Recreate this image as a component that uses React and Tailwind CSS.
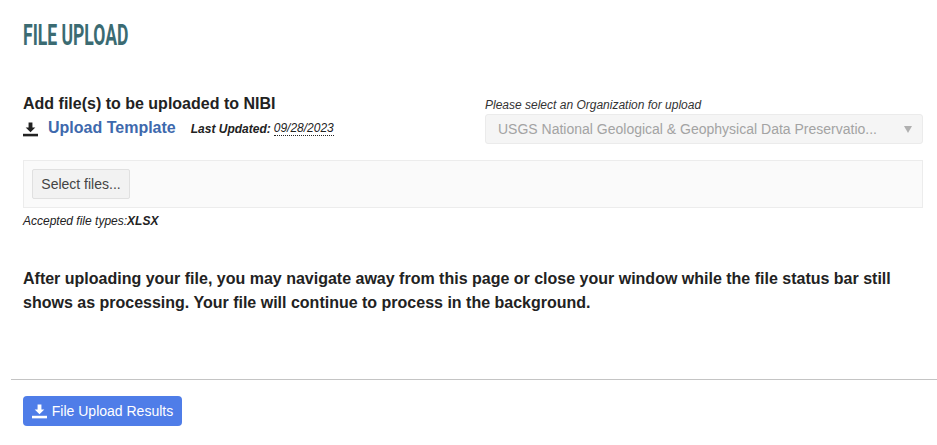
const Dl = ({ className }) => (
  <svg viewBox="0 0 14 14" className={className} fill="currentColor">
    <path d="M5.2 0.5h3.6v4.6h2.7L7 9.6 2.5 5.1h2.7z" />
    <rect x="0" y="11" width="14" height="2.4" />
  </svg>
);

export default function App() {
  return (
    <div className="w-[937px] h-[445px] bg-white overflow-hidden font-['Liberation_Sans',Arial,sans-serif] text-[#222]">
      <div className="pl-[23px] pr-[14px]">
        <div className="pt-[20px] h-[92px]">
          <h1 className="origin-left scale-x-[0.585] w-[200px] whitespace-nowrap font-['Roboto',sans-serif] font-bold text-[30px] leading-[30px] text-[#3b6b72]">FILE UPLOAD</h1>
        </div>
        <div className="flex justify-between h-[68px]">
          <div>
            <div className="font-bold text-[16px] leading-[24px]">Add file(s) to be uploaded to NIBI</div>
            <div className="flex items-center h-[24px]">
              <Dl className="w-[15px] h-[15px] text-[#222] mt-[3px]" />
              <a className="ml-[10px] font-bold text-[16px] text-[#3e69ad]">Upload Template</a>
              <span className="ml-[15px] italic text-[12px] font-bold mt-[1px]">Last Updated:</span>
              <span className="ml-[3px] italic text-[12px] mt-[1px] leading-[14px] border-b border-dotted border-[#222]">09/28/2023</span>
            </div>
          </div>
          <div className="w-[438px] pt-[6px]">
            <div className="italic text-[12px] leading-[14px] text-[#333]">Please select an Organization for upload</div>
            <div className="mt-[2px] h-[30px] rounded-[3px] border border-[#ebebeb] bg-[#f5f5f5] flex items-center pl-[12px] pr-[10px] justify-between">
              <span className="text-[14px] text-[#a3a3a3] whitespace-nowrap">USGS National Geological &amp; Geophysical Data Preservatio...</span>
              <span className="w-0 h-0 border-x-[4px] border-x-transparent border-t-[7px] border-t-[#b0b0b0]" />
            </div>
          </div>
        </div>
        <div className="h-[48px] border border-[#ececec] bg-[#fafafa] flex items-center pl-[8px]">
          <button className="h-[30px] w-[98px] border border-[#e0e0e0] bg-[#f2f2f2] rounded-[2px] text-[14px] text-[#444]">Select files...</button>
        </div>
        <div className="mt-[6px] italic text-[12px] leading-[14px]">Accepted file types:<b>XLSX</b></div>
        <p className="mt-[39px] font-bold text-[16px] leading-[24px] w-[900px]">After uploading your file, you may navigate away from this page or close your window while the file status bar still shows as processing. Your file will continue to process in the background.</p>
      </div>
      <div className="ml-[11px] mt-[64px] h-px bg-[#c4c4c4]" />
      <div className="pl-[23px] pt-[16px]">
        <button className="h-[30px] w-[159px] rounded-[4px] bg-[#4f7de8] text-white text-[14px] flex items-center justify-center gap-[5px]">
          <Dl className="w-[15px] h-[15px]" />
          File Upload Results
        </button>
      </div>
    </div>
  );
}
